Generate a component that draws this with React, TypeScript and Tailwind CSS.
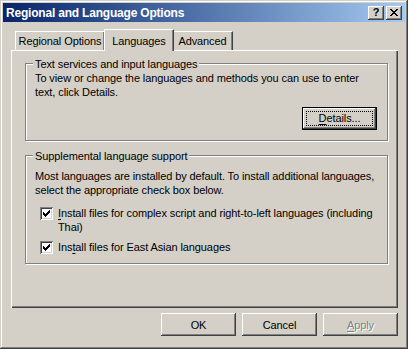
import React from 'react';

const raised =
  'shadow-[inset_-1px_-1px_0_#404040,inset_1px_1px_0_#ffffff,inset_-2px_-2px_0_#808080,inset_2px_2px_0_#d4d0c8]';

const CHECK_COLS = [2, 3, 4, 3, 2, 1, 0];
const CLOSE_ROWS = ['XX....XX', '.XX..XX.', '..XXXX..', '...XX...', '..XXXX..', '.XX..XX.', 'XX....XX'];

const CheckMark = () => (
  <svg width="7" height="7" viewBox="0 0 7 7" shapeRendering="crispEdges">
    {CHECK_COLS.map((y, x) => (
      <rect key={x} x={x} y={y} width="1" height="3" fill="#000" />
    ))}
  </svg>
);

const CloseGlyph = () => (
  <svg width="8" height="7" viewBox="0 0 8 7" shapeRendering="crispEdges">
    {CLOSE_ROWS.flatMap((row, y) =>
      row.split('').map((c, x) => (c === 'X' ? <rect key={`${x}-${y}`} x={x} y={y} width="1" height="1" fill="#000" /> : null))
    )}
  </svg>
);

const CheckBox = () => (
  <div className="mt-[1px] flex h-[13px] w-[13px] shrink-0 items-center justify-center bg-white shadow-[inset_1px_1px_0_#808080,inset_-1px_-1px_0_#ffffff,inset_2px_2px_0_#404040,inset_-2px_-2px_0_#d4d0c8]">
    <CheckMark />
  </div>
);

const GroupBox: React.FC<{ label: string; className?: string; children: React.ReactNode }> = ({ label, className, children }) => (
  <div className={`relative border border-[#808080] shadow-[inset_1px_1px_0_#ffffff,1px_1px_0_#ffffff] ${className ?? ''}`}>
    <span className="absolute left-[7px] top-[-7px] bg-[#d4d0c8] px-[2px] leading-[14px]">{label}</span>
    {children}
  </div>
);

const PushButton: React.FC<{ children: React.ReactNode; disabled?: boolean }> = ({ children, disabled }) => (
  <button
    className={`flex h-[23px] w-[75px] items-center justify-center bg-[#d4d0c8] leading-[14px] ${raised} ${
      disabled ? 'text-[#808080] [text-shadow:1px_1px_0_#ffffff]' : 'text-black'
    }`}
  >
    {children}
  </button>
);

export default function App() {
  return (
    <div className="h-[350px] w-[410px] bg-white font-['Liberation_Sans',Arial,sans-serif] text-[11px] tracking-[-0.1px] text-black">
      <div className="flex h-[349px] w-[408px] flex-col bg-[#d4d0c8] p-[3px] shadow-[inset_-1px_-1px_0_#404040,inset_1px_1px_0_#d4d0c8,inset_-2px_-2px_0_#808080,inset_2px_2px_0_#ffffff]">
        {/* caption */}
        <div className="flex h-[19px] items-center justify-between bg-linear-to-r from-[#0a246a] to-[#a6caf0] pl-[3px] pr-[3px]">
          <span className="text-[12px] font-bold tracking-[-0.2px] text-white">Regional and Language Options</span>
          <div className="flex gap-[2px]">
            <div className={`flex h-[14px] w-[16px] items-center justify-center bg-[#d4d0c8] text-[11px] font-bold leading-none ${raised}`}>?</div>
            <div className={`flex h-[14px] w-[16px] items-center justify-center bg-[#d4d0c8] ${raised}`}>
              <CloseGlyph />
            </div>
          </div>
        </div>

        <div className="flex flex-1 flex-col pl-[8px] pr-[7px]">
          {/* tabs */}
          <div className="mt-[7px] flex items-end pl-[4px]">
            <div className="flex h-[19px] w-[90px] items-center justify-center border-l border-t border-r border-white border-r-[#404040] pt-[1px] shadow-[inset_-1px_0_0_#808080]">
              Regional Options
            </div>
            <div className="relative z-10 -mb-[1px] -ml-[1px] flex h-[22px] w-[70px] items-start justify-center border-l border-t border-r border-white border-r-[#404040] bg-[#d4d0c8] pt-[3px] shadow-[inset_-1px_0_0_#808080]">
              Languages
            </div>
            <div className="-ml-[1px] flex h-[19px] w-[60px] items-center justify-center border-t border-r border-white border-r-[#404040] pt-[1px] shadow-[inset_-1px_0_0_#808080]">
              Advanced
            </div>
          </div>

          {/* page */}
          <div className="flex h-[258px] flex-col pl-[14px] pr-[10px] pt-[13px] shadow-[inset_1px_1px_0_#ffffff,inset_-1px_-1px_0_#404040,inset_-2px_-2px_0_#808080]">
            <GroupBox label="Text services and input languages" className="h-[78px]">
              <div className="pl-[9px] pr-[10px] pt-[7px] leading-[14px]">
                <p>
                  To view or change the languages and methods you can use to enter
                  <br />
                  text, click Details.
                </p>
                <div className="mt-[8px] flex justify-end">
                  <button className="h-[23px] w-[75px] border border-black bg-[#d4d0c8] p-0">
                    <div className={`flex h-full w-full items-center justify-center p-[3px] ${raised}`}>
                      <div className="flex h-full w-full items-center justify-center border border-dotted border-black leading-[13px]">
                        <span>
                          <span className="underline underline-offset-2">D</span>etails...
                        </span>
                      </div>
                    </div>
                  </button>
                </div>
              </div>
            </GroupBox>

            <GroupBox label="Supplemental language support" className="mt-[14px] h-[109px]">
              <div className="pl-[9px] pt-[13px] leading-[14px]">
                <p>
                  Most languages are installed by default. To install additional languages,
                  <br />
                  select the appropriate check box below.
                </p>
                <div className="ml-[5px] mt-[9px] flex gap-[5px]">
                  <CheckBox />
                  <p>
                    <span className="underline underline-offset-2">I</span>nstall files for complex script and right-to-left languages (including
                    <br />
                    Thai)
                  </p>
                </div>
                <div className="ml-[5px] mt-[6px] flex gap-[5px]">
                  <CheckBox />
                  <p>
                    Ins<span className="underline underline-offset-2">t</span>all files for East Asian languages
                  </p>
                </div>
              </div>
            </GroupBox>
          </div>

          {/* dialog buttons */}
          <div className="mt-[5px] flex justify-end gap-[6px]">
            <PushButton>OK</PushButton>
            <PushButton>Cancel</PushButton>
            <PushButton disabled>
              <span>
                <span className="underline underline-offset-2">A</span>pply
              </span>
            </PushButton>
          </div>
        </div>
      </div>
    </div>
  );
}
